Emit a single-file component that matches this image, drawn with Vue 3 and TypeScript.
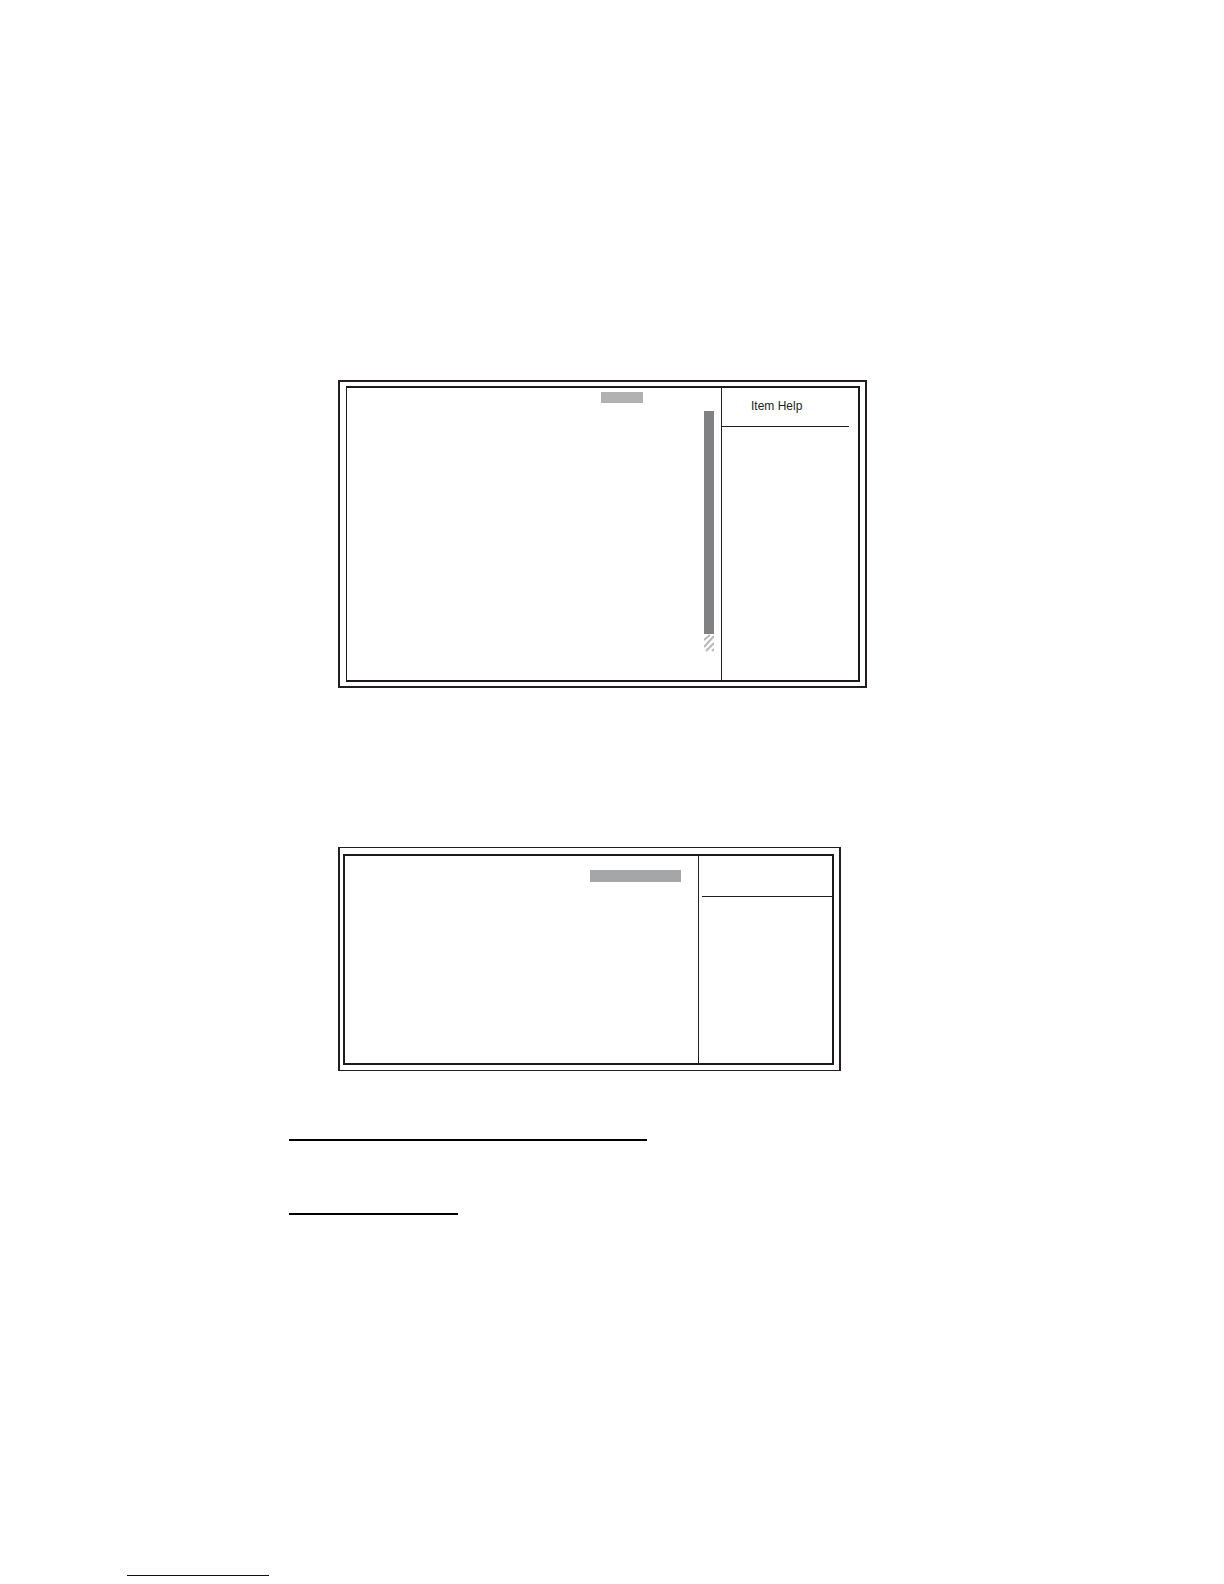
<script setup lang="ts">
const itemHelp: string = 'Item Help'
const stripes: string[] = ['M0 6L6 1', 'M0 13L10 2', 'M2 17L10 9', 'M8 17L10 15']
</script>

<template>
  <main class="page">
    <section class="panel setup">
      <div class="frame">
        <div class="settings">
          <div class="selected"></div>
          <div class="scroll">
            <div class="thumb"></div>
            <svg class="hatch" viewBox="0 0 10 18" aria-hidden="true">
              <path v-for="d in stripes" :key="d" :d="d" />
            </svg>
          </div>
        </div>
        <aside class="help">
          <h2 class="help-title">{{ itemHelp }}</h2>
        </aside>
      </div>
    </section>

    <section class="panel submenu">
      <div class="frame">
        <div class="settings">
          <div class="selected"></div>
        </div>
        <aside class="help">
          <div class="help-title"></div>
        </aside>
      </div>
    </section>

    <hr class="rule wide" />
    <hr class="rule narrow" />
    <hr class="footer-rule" />
  </main>
</template>

<style>
body {
  margin: 0;
  background: #fff;
}
</style>

<style scoped>
.page {
  display: flex;
  flex-direction: column;
  padding: 380px 0 8px;
  font-family: "Liberation Sans", Arial, sans-serif;
  color: #231f20;
}

.panel {
  box-sizing: border-box;
  display: flex;
  margin-left: 338px;
  border: 2px solid #231f20;
}

.frame {
  flex: 1;
  display: flex;
  border: 2px solid #1c1a1b;
}

.settings {
  flex: 1;
  display: flex;
  flex-direction: column;
  align-items: flex-end;
}

.help {
  border-left: 1px solid #231f20;
}

.help-title {
  box-sizing: border-box;
  margin: 0;
  border-bottom: 1px solid #231f20;
  font-size: 12px;
  line-height: 14px;
  font-weight: 400;
}

.setup {
  min-height: 308px;
  margin-right: 357px;
  padding: 4px 5px 4px 6px;
}

.setup .frame {
  border-left-width: 1px;
}

.setup .settings {
  gap: 8px;
  padding: 4px 7px 28px 0;
}

.setup .selected {
  width: 42px;
  height: 11px;
  margin-right: 71px;
  background: #b1b1b1;
}

.setup .help {
  width: 136px;
}

.setup .help-title {
  height: 39px;
  margin-right: 9px;
  padding: 11px 0 0 29px;
}

.scroll {
  flex: 1;
  display: flex;
  flex-direction: column;
  width: 10px;
}

.thumb {
  flex: 1;
  background: #808183;
}

.hatch {
  display: block;
  width: 10px;
  height: 18px;
  fill: none;
  stroke: #b8b8b8;
  stroke-width: 2;
}

.submenu {
  min-height: 224px;
  margin-top: 159px;
  margin-right: 383px;
  padding: 6px 5px 5px 3px;
  border-width: 1px 2px;
}

.submenu .settings {
  padding: 14px 17px 0 0;
}

.submenu .selected {
  width: 91px;
  height: 12px;
  background: #a5a6a8;
}

.submenu .help {
  width: 133px;
}

.submenu .help-title {
  height: 41px;
  margin-left: 3px;
}

.rule {
  height: 2px;
  margin: 68px 0 0 289px;
  border: 0;
  background: #000;
}

.wide {
  width: 358px;
}

.narrow {
  width: 169px;
  margin-top: 72px;
}

.footer-rule {
  width: 142px;
  height: 1px;
  margin: 360px 0 0 127px;
  border: 0;
  background: #000080;
}
</style>
